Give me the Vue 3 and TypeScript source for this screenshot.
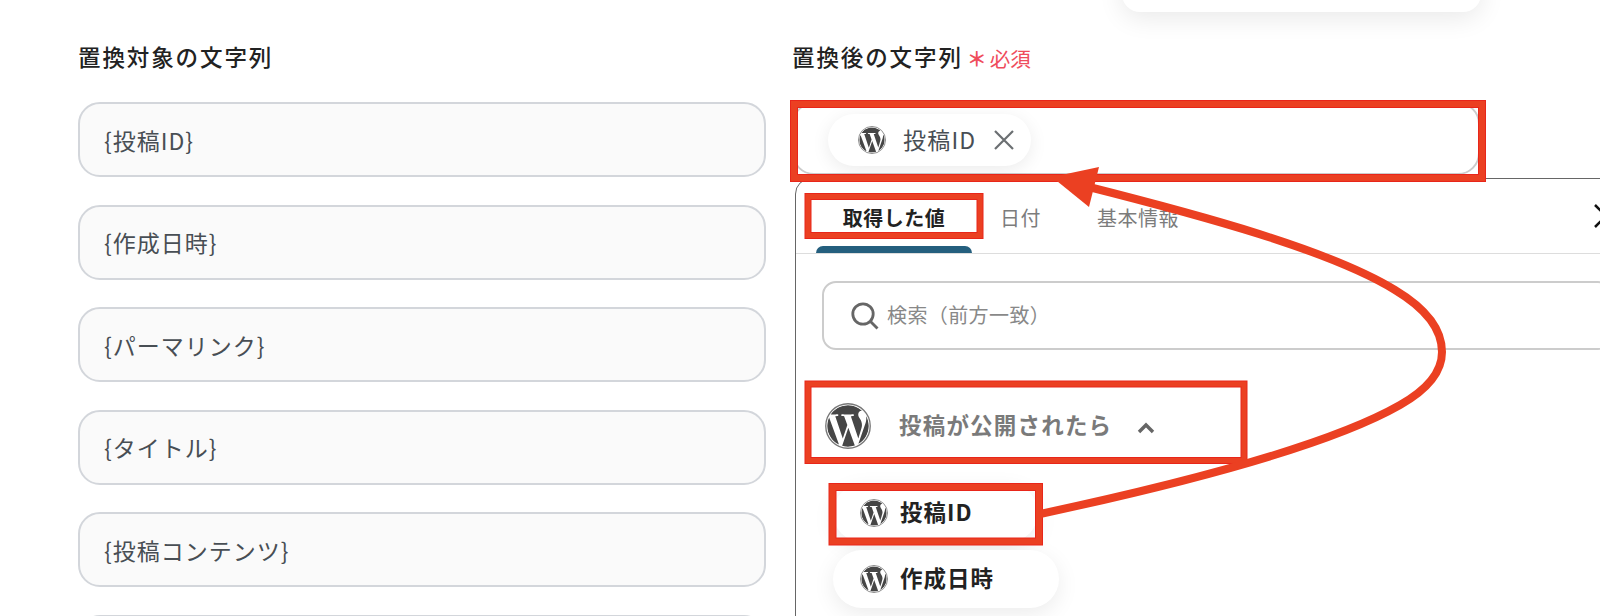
<template>
  <div class="page">
    <svg class="defs" width="0" height="0">
      <symbol id="wp-mark" viewBox="0 0 24 24">
        <circle cx="12" cy="12" r="11" fill="#464646" />
        <path :d="wpPath" fill="#fff" />
        <circle cx="12" cy="12" r="11.6" fill="none" stroke="#777" stroke-width="0.7" />
      </symbol>
    </svg>

    <div class="top-menu"></div>

    <div class="columns">
      <!-- 置換対象 -->
      <section class="col">
        <h3 class="field-label">置換対象の文字列</h3>
        <div class="targets">
          <div v-for="(t, i) in targets" :key="i" class="target-input">{{ t }}</div>
        </div>
      </section>

      <!-- 置換後 -->
      <section class="col">
        <h3 class="field-label">
          置換後の文字列
          <span class="required"><span class="star">＊</span>必須</span>
        </h3>
        <div class="value-input">
          <div class="chip">
            <svg class="wp"><use href="#wp-mark" /></svg>
            <span class="chip-text">投稿ID</span>
            <svg class="chip-x" viewBox="0 0 20 20"><path d="M1 1l18 18M19 1L1 19" /></svg>
          </div>
        </div>

        <div class="panel">
          <div class="tabs">
            <div v-for="(tab, i) in tabs" :key="tab" :class="['tab', { active: i === 0 }]">
              <span>{{ tab }}</span>
            </div>
            <svg class="panel-close" viewBox="0 0 24 24"><path d="M1 1l22 22M23 1L1 23" /></svg>
          </div>

          <div class="search">
            <svg class="search-icon" viewBox="0 0 28 28">
              <circle cx="12" cy="12" r="10.2" />
              <path d="M19.5 19.5l7 7" />
            </svg>
            <span>検索（前方一致）</span>
          </div>

          <div class="group-head">
            <svg class="wp-large"><use href="#wp-mark" /></svg>
            <span class="group-title">投稿が公開されたら</span>
            <svg class="chevron" viewBox="0 0 18 12"><path d="M2 10l7-7 7 7" /></svg>
          </div>

          <div class="items">
            <div v-for="item in items" :key="item" class="item">
              <svg class="wp"><use href="#wp-mark" /></svg>
              <span>{{ item }}</span>
            </div>
          </div>
        </div>
      </section>
    </div>

    <!-- annotations -->
    <svg class="notes" width="1600" height="616" viewBox="0 0 1600 616">
      <g v-for="b in boxes" :key="b.x" fill="none">
        <rect :x="b.x" :y="b.y" :width="b.w" :height="b.h" stroke="#e8261a" :stroke-width="b.t" />
        <rect :x="b.x" :y="b.y" :width="b.w" :height="b.h" stroke="#eb4022" :stroke-width="b.t - 2" />
      </g>
      <path
        d="M1040 514C1180 484 1330 445 1400 405C1430 388 1442 370 1442 352C1442 325 1420 305 1395 290C1330 250 1200 215 1085 186"
        fill="none"
        stroke="#eb4022"
        stroke-width="8"
      />
      <polygon points="1052,177 1099,167 1089,207" fill="#eb4022" />
    </svg>
  </div>
</template>

<script setup lang="ts">
const targets = ['{投稿ID}', '{作成日時}', '{パーマリンク}', '{タイトル}', '{投稿コンテンツ}', '']
const tabs = ['取得した値', '日付', '基本情報']
const items = ['投稿ID', '作成日時']

// red highlight boxes, centre line of the stroke
const boxes = [
  { x: 794, y: 104, w: 688, h: 74, t: 8 },
  { x: 808, y: 196.5, w: 172, h: 39, t: 7 },
  { x: 808, y: 384, w: 436, h: 76.5, t: 7 },
  { x: 832.5, y: 487, w: 206.5, h: 54.5, t: 8 },
]

const wpPath =
  'M21.469 6.825c.84 1.537 1.318 3.3 1.318 5.175 0 3.979-2.156 7.456-5.363 9.325l3.295-9.527c.615-1.54.82-2.771.82-3.864 0-.405-.026-.78-.07-1.11m-7.981.105c.647-.03 1.232-.105 1.232-.105.582-.075.514-.93-.067-.899 0 0-1.755.135-2.88.135-1.064 0-2.85-.15-2.85-.15-.585-.03-.661.855-.075.885 0 0 .54.061 1.125.09l1.68 4.605-2.37 7.08L5.354 6.9c.649-.03 1.234-.1 1.234-.1.585-.075.516-.93-.065-.896 0 0-1.746.138-2.874.138-.2 0-.438-.008-.69-.015C4.911 3.15 8.235 1.215 12 1.215c2.809 0 5.365 1.072 7.286 2.833-.046-.003-.091-.009-.141-.009-1.06 0-1.812.923-1.812 1.914 0 .89.513 1.643 1.06 2.531.411.72.89 1.643.89 2.977 0 .915-.354 1.994-.821 3.479l-1.075 3.585-3.9-11.61.001.014zM12 22.784c-1.059 0-2.081-.153-3.048-.437l3.237-9.406 3.315 9.087c.024.053.05.101.078.149-1.12.393-2.325.609-3.582.609M1.211 12c0-1.564.336-3.05.935-4.39L7.29 21.709C3.694 19.96 1.212 16.271 1.211 12M12 0C5.385 0 0 5.385 0 12s5.385 12 12 12 12-5.385 12-12S18.615 0 12 0'
</script>

<style>
html,
body {
  margin: 0;
  background: #fff;
  overflow: hidden;
}
</style>

<style scoped>
.page {
  position: relative;
  width: 1600px;
  height: 616px;
  overflow: hidden;
  background: #fff;
  font-family: 'Noto Sans CJK JP', 'Noto Sans', sans-serif;
  color: #222;
}

.defs {
  position: absolute;
}

.top-menu {
  position: absolute;
  left: 1122px;
  top: -40px;
  width: 359px;
  height: 52px;
  background: #fff;
  border-radius: 18px;
  box-shadow: 0 6px 26px rgba(0, 0, 0, 0.09);
}

.columns {
  display: grid;
  grid-template-columns: 688px 1fr;
  column-gap: 26px;
  padding-left: 78px;
}

.col {
  min-width: 0;
}

.field-label {
  display: flex;
  align-items: center;
  height: 30px;
  margin: 41px 0 31px;
  font-size: 22.5px;
  line-height: 30px;
  font-weight: 500;
  letter-spacing: 1.9px;
  color: #222;
}

.required {
  display: inline-flex;
  align-items: center;
  margin: 3px 0 0 4px;
  font-size: 20.5px;
  font-weight: 400;
  letter-spacing: 0;
  color: #ef4c5c;
}

.star {
  width: 23px;
  font-size: 20px;
  font-weight: 700;
  margin-top: 2px;
}

/* left inputs */
.targets {
  display: flex;
  flex-direction: column;
  gap: 27.5px;
}

.target-input {
  flex: none;
  box-sizing: border-box;
  height: 75px;
  padding: 0 24px;
  display: flex;
  align-items: center;
  background: #fafafa;
  border: 2px solid #d3d6db;
  border-radius: 22px;
  font-size: 23px;
  letter-spacing: 1px;
  color: #484e54;
}

/* right value input */
.value-input {
  box-sizing: border-box;
  width: 688px;
  height: 73px;
  padding: 10px 34px;
  border: 2px solid #ccc;
  border-radius: 22px;
}

.chip {
  display: inline-flex;
  align-items: center;
  box-sizing: border-box;
  height: 52px;
  padding: 0 17px 0 30px;
  background: #fff;
  border-radius: 26px;
  box-shadow: 0 4px 18px rgba(0, 0, 0, 0.08);
}

.chip-text {
  margin: 0 0 2px 17px;
  font-size: 23px;
  letter-spacing: 1.2px;
  color: #484e54;
}

.chip-x {
  width: 20px;
  height: 20px;
  margin-left: 18px;
  fill: none;
  stroke: #6b6f72;
  stroke-width: 2.2;
}

.wp {
  flex: none;
  width: 28px;
  height: 28px;
}

/* panel */
.panel {
  box-sizing: border-box;
  width: 844px;
  height: 460px;
  margin: 3px 0 0 3px;
  border: 1.5px solid #666;
  border-radius: 16px 0 0 0;
}

.tabs {
  display: flex;
  align-items: flex-end;
  height: 74px;
  padding: 0 20px;
  border-bottom: 1.5px solid #ddd;
}

.tab {
  box-sizing: border-box;
  padding: 24px 28px 0;
  font-size: 20px;
  line-height: 30px;
  letter-spacing: 0.5px;
  color: #7c7c7c;
  text-align: center;
}

.tab span {
  display: block;
  margin-bottom: 20px;
}

.tab.active {
  width: 156px;
  padding: 24px 0 0;
  font-weight: 700;
  color: #222;
}

.tab.active::after {
  content: '';
  display: block;
  height: 7px;
  margin-top: -7px;
  background: #245f7e;
  border-radius: 8px 8px 0 0;
}

.panel-close {
  align-self: center;
  width: 24px;
  height: 24px;
  margin-left: auto;
  fill: none;
  stroke: #111;
  stroke-width: 2.5;
}

.search {
  display: flex;
  align-items: center;
  gap: 8px;
  box-sizing: border-box;
  height: 69px;
  margin: 27px 26px 0 26px;
  padding: 0 0 0 27px;
  border: 2px solid #ccc;
  border-radius: 14px;
  font-size: 20px;
  letter-spacing: 0.4px;
  color: #888;
}

.search span {
  margin-bottom: 2px;
}

.search-icon {
  width: 28px;
  height: 28px;
  fill: none;
  stroke: #666;
  stroke-width: 2.8;
}

.group-head {
  display: flex;
  align-items: center;
  height: 46px;
  margin: 53px 0 0 29px;
}

.wp-large {
  flex: none;
  width: 46px;
  height: 46px;
}

.group-title {
  margin: 0 0 4px 28px;
  font-size: 22.5px;
  font-weight: 700;
  letter-spacing: 1.2px;
  color: #7a7a7a;
}

.chevron {
  width: 18px;
  height: 12px;
  margin: 3px 0 0 25px;
  fill: none;
  stroke: #666;
  stroke-width: 3.4;
}

.items {
  display: flex;
  flex-direction: column;
  align-items: flex-start;
  gap: 8px;
  margin: 35px 0 0 37px;
}

.item {
  display: flex;
  align-items: center;
  gap: 12px;
  box-sizing: border-box;
  height: 58px;
  padding: 0 65px 0 27px;
  background: #fff;
  border-radius: 29px;
  box-shadow: 0 6px 22px rgba(0, 0, 0, 0.08);
  font-size: 22.5px;
  font-weight: 700;
  letter-spacing: 1px;
  color: #222;
}

.item span {
  margin-bottom: 4px;
}

.notes {
  position: absolute;
  left: 0;
  top: 0;
  pointer-events: none;
}
</style>
